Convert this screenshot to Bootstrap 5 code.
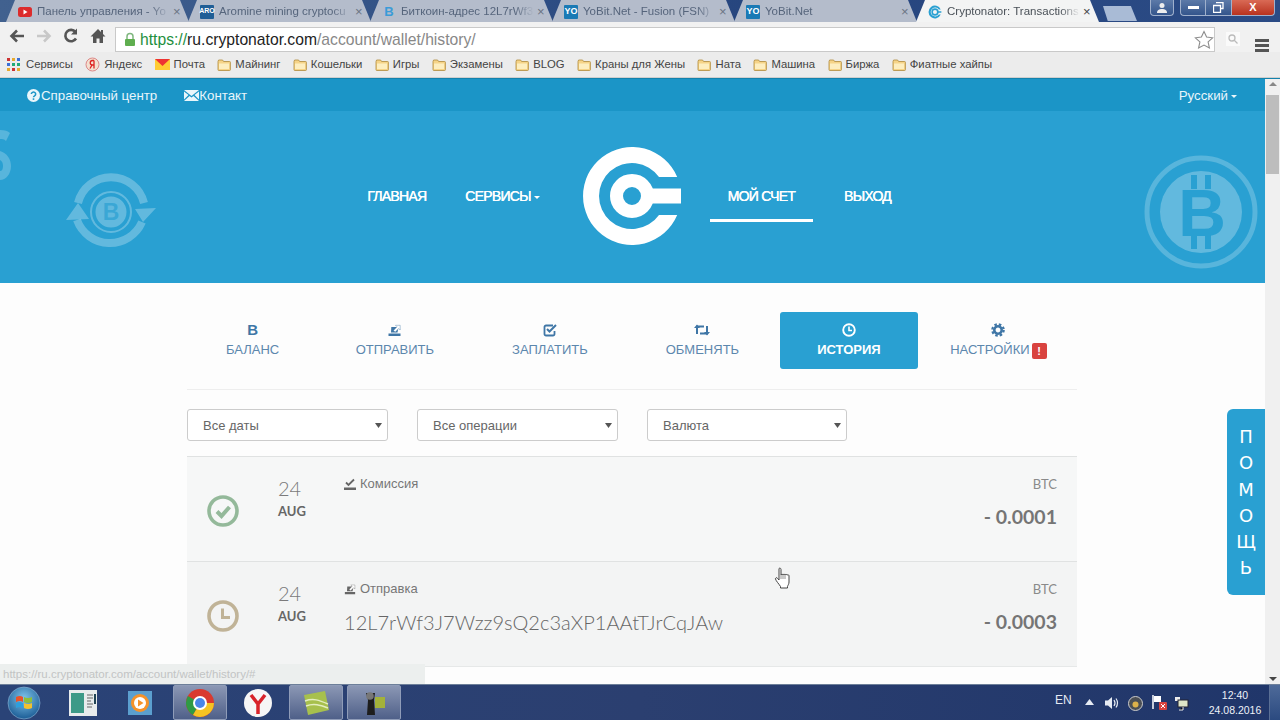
<!DOCTYPE html>
<html lang="ru">
<head>
<meta charset="utf-8">
<title>Cryptonator: Transactions</title>
<link href="https://cdn.jsdelivr.net/npm/bootstrap@5.3.0/dist/css/bootstrap.min.css" rel="stylesheet">
<style>
html,body{height:720px;overflow:hidden}
body{width:1280px;background:#fdfdfd;font-family:"Liberation Sans",Arial,sans-serif;color:#666}
a{text-decoration:none}
.tabstrip{height:22px;background:linear-gradient(90deg,#41618f,#26457e 60%,#2b4b85);padding-left:6px}
.btab{width:183px;margin-right:-1px;height:22px;flex:none;background:#b4bccb;clip-path:polygon(0 100%,9px 0,calc(100% - 9px) 0,100% 100%);padding:1px 0 0 12px;color:#56657c;font-size:11.5px;position:relative}
.btab.on{background:#f3f4f4;color:#4a5158}
.tfav{width:14px;height:14px;flex:none;margin-right:5px;display:flex;align-items:center;justify-content:center;font-size:7px;font-weight:700;color:#fff;border-radius:1px}
.ttl{width:133px;flex:none;overflow:hidden;white-space:nowrap;-webkit-mask-image:linear-gradient(90deg,#000 85%,transparent);mask-image:linear-gradient(90deg,#000 85%,transparent)}
.tx{margin-left:3px;font-size:13px;line-height:14px;color:#6b7483}
.newtab{width:34px;height:15px;background:#a9bbd6;margin:6px 0 0 5px;flex:none;clip-path:polygon(0 0,82% 0,100% 100%,14% 100%)}
.winbtns{margin-left:auto;padding-right:5px;gap:6px;align-items:flex-start}
.wbt{height:16px;border:1px solid #9fb0cc;border-top:0;border-radius:0 0 4px 4px;background:linear-gradient(#5c7aa8,#34558c);display:flex;align-items:center;justify-content:center}
.toolbar{height:30px;background:#f1f1f1;padding:5px 0 0 8px}
.tool{width:18px;height:18px;margin-right:9px;flex:none}
.omni{width:1100px;height:25px;background:#fff;border:1px solid #c9c9c9;font-size:15.7px;line-height:23px;padding-left:8px;color:#888;margin-left:-1px;flex:none}
.omni b{font-weight:400;color:#1e8f3e}.omni i{font-style:normal;color:#222}
.bmarks{height:26px;background:#ececec;padding-left:7px;font-size:11.3px;color:#444;gap:12.4px;border-bottom:1px solid #cfcfcf}
.bm{gap:4px;white-space:nowrap}
.viewport{height:606px;position:relative;overflow:hidden;border-top:1px solid #1482ac}
.pagearea{width:1265px;flex:none;position:relative;overflow:hidden}
.sbar{width:15px;background:#f0f0f0;position:relative}
.sthumb{height:79px;background:#bdbdbd;margin:16px 1px 0}
.sarrow{height:0;width:0;border:4px solid transparent;position:absolute;left:4px}
.topstrip{height:32px;background:#1b95c7;color:#e9f6fb;font-size:13.3px;padding:1px 28px 0 27px}
.topstrip a{color:#e9f6fb}
.hero{height:172px;background:#29a0d2;position:relative;padding:0 7px 2px 0}
.hitem{padding:16px 18px 13px;line-height:20px;border-bottom:3px solid transparent;color:#fff;font-size:14px;font-weight:400;text-shadow:.4px 0 0 #fff;white-space:nowrap;letter-spacing:-.75px}
.hitem.cur{border-bottom-color:#fff}
.caret-d{display:inline-block;border:3.5px solid transparent;border-top-color:currentColor;border-bottom:0;vertical-align:middle;margin-left:3px}
.deco{position:absolute}
.wrapc{width:890px;margin-left:187px}
.acct{margin-top:29px;padding-bottom:20px;border-bottom:1px solid #eee;gap:3px}
.acct a{height:57px;padding:11px 37.5px 0;text-align:center;border-radius:3px;color:#5c87ad;font-size:13px;line-height:18px;white-space:nowrap;display:block}
.acct a:first-child{padding-left:39px;padding-right:36px}
.acct a svg,.tglyph{display:block;margin:0 auto 4px}
.tglyph{height:14px;line-height:14px;font-size:15px;font-weight:700;color:#3f76a6}
.acct a.act{background:#29a0d2;color:#fff;font-weight:700}
.acct a.set{padding-left:29px;padding-right:0}
.warn{display:inline-block;background:#d9433f;color:#fff;font-weight:700;width:15px;height:16px;line-height:16px;border-radius:2px;font-size:11px;vertical-align:-1px;margin-left:2px;text-align:center}
.filters{gap:29px;margin:19px 0 15px}
.filters select{width:201px;height:32px;flex:none;font-size:13px;color:#666;padding:1px 20px 0 15px;border:1px solid #ccc;border-radius:3px;background-size:7px 5px;background-position:right 5px center;background-image:url("data:image/svg+xml,%3Csvg xmlns='http://www.w3.org/2000/svg' viewBox='0 0 7 5'%3E%3Cpath d='M0 0h7L3.5 5z' fill='%23555'/%3E%3C/svg%3E");box-shadow:none}
.filters select.w3{width:200px}
.txrow{height:105px;background:#f6f7f7;border-top:1px solid #e0e2e2;padding:18px 20px 0 20px}
.txrow.alt{background:#f3f4f4}
.txend{border-top:1px solid #e6e8e8;height:40px}
.stico{width:32px;height:32px;margin-top:20px;flex:none}
.dt{width:34px;margin-left:39px;margin-right:32px;margin-top:1px;flex:none;font-family:Lato,"Liberation Sans",sans-serif;text-align:left}
.dt .dd{font-size:20px;font-weight:300;line-height:24px;color:#7a7a7a}
.dt .mm{font-size:13px;font-weight:700;line-height:18px;margin-top:2px;color:#666}
.lbl{font-size:13px;line-height:18px;color:#777;display:flex;align-items:center;gap:4px}
.addr{font-family:Lato,"Liberation Sans",sans-serif;font-weight:300;font-size:20px;line-height:24px;margin-top:12px;color:#666;letter-spacing:.05px}
.amt{text-align:right;font-family:Lato,"Liberation Sans",sans-serif;margin-left:auto}
.amt .cur-n{font-size:13px;line-height:18px;color:#8a8a8a}
.amt .val{font-size:19.5px;line-height:24px;margin-top:12px;font-weight:700;color:#757575}
.helpme{position:absolute;right:0;top:330px;width:38px;height:186px;background:#29a0d2;border-radius:6px 0 0 6px;color:#fff;font-size:18px;line-height:26.3px;text-align:center;padding-top:15px;font-family:"DejaVu Sans","Liberation Sans",sans-serif}
.statusb{position:absolute;left:0;bottom:0;width:425px;height:20px;background:#ecefee;color:#c2c4c4;font-size:11.5px;line-height:20px;padding-left:3px}
.pointer{position:absolute;left:774px;top:488px}
.taskbar{height:36px;background:linear-gradient(90deg,#2a4377,#2b3f70 50%,#20366a);border-top:1px solid #6d7f99;position:relative}
.tbi{width:54px;height:35px;flex:none;margin-right:4px;display:flex;align-items:center;justify-content:center}
.tbi.hi{background:linear-gradient(#8b97b4,#4f6089);border:1px solid #8f9cb8;border-radius:2px}
.orb{width:69px;flex:none;padding-left:6px}
.tray{margin-left:auto;color:#e6ebf3;font-size:12px;gap:0}
.clock{text-align:center;line-height:15px;font-size:10.5px;width:68px;color:#eef2f8}
.showd{width:11px;height:35px;background:linear-gradient(#4e6a99,#2b4a80);border-left:1px solid #5a6f95}
</style>
</head>
<body class="d-flex flex-column">
<svg width="0" height="0" class="position-absolute">
<symbol id="fold" viewBox="0 0 14 12"><path d="M1 2.5 1.6 1h4l1 1.500h6a.8.8 0 0 1 .8.8v7.400a.8.8 0 0 1-.8.800H1.800a.8.8 0 0 1-.8-.8z" fill="#f6d488" stroke="#b08a3c" stroke-width=".8"/><path d="M2 4.500h10v5.500H2z" fill="#fdeec0"/></symbol>
<symbol id="send" viewBox="0 0 14 14"><path d="M1 10.500h12V13H1zM3.500 9.500l.3-5.500h7.200l-1 5.500z" fill="currentColor"/><path d="M6 7.500 9.500 3.800 8 2.300h4.700V7L11.200 5.500 7.700 9z" fill="#fff" stroke="currentColor" stroke-width=".4"/></symbol>
</svg>

<div class="tabstrip d-flex">
  <div class="btab d-flex align-items-center"><span class="tfav"><svg width="14" height="10" viewBox="0 0 14 10"><rect width="14" height="10" rx="2.500" fill="#dc2c2c"/><path d="M5.500 2.500 9.500 5l-4 2.500z" fill="#fff"/></svg></span><span class="ttl">Панель управления - Yo</span><span class="tx">×</span></div>
  <div class="btab d-flex align-items-center"><span class="tfav" style="background:#1f5e96">ARO</span><span class="ttl">Aromine mining cryptocu</span><span class="tx">×</span></div>
  <div class="btab d-flex align-items-center"><span class="tfav" style="color:#3a9bd8;font-size:13px">B</span><span class="ttl">Биткоин-адрес 12L7rWf3</span><span class="tx">×</span></div>
  <div class="btab d-flex align-items-center"><span class="tfav" style="background:#1a7ab5;font-size:9px">YO</span><span class="ttl">YoBit.Net - Fusion (FSN)</span><span class="tx">×</span></div>
  <div class="btab d-flex align-items-center"><span class="tfav" style="background:#1a7ab5;font-size:9px">YO</span><span class="ttl">YoBit.Net</span><span class="tx">×</span></div>
  <div class="btab on d-flex align-items-center"><span class="tfav"><svg width="14" height="14" viewBox="-11 -11 22 22"><path d="M9 -4A10 10 0 1 0 9 4L6 4A7 7 0 1 1 6 -4z" fill="#29a0d2"/><circle r="4.500" fill="none" stroke="#29a0d2" stroke-width="2.500"/><path d="M3-1.200h7v2.400H3z" fill="#29a0d2"/></svg></span><span class="ttl">Cryptonator: Transactions</span><span class="tx" style="color:#444">×</span></div>
  <div class="newtab"></div>
  <div class="winbtns d-flex">
    <div class="wbt" style="width:24px"><svg width="12" height="12" viewBox="0 0 12 12"><circle cx="6" cy="3.500" r="2.500" fill="#eee"/><path d="M1 11c0-3 2-4 5-4s5 1 5 4z" fill="#eee"/></svg></div>
    <div class="d-flex">
      <div class="wbt" style="width:25px;border-radius:0 0 0 4px;border-right:0"><span class="d-block bg-white" style="width:11px;height:3px"></span></div>
      <div class="wbt" style="width:26px;border-radius:0;border-right:0"><svg width="11" height="11" viewBox="0 0 11 11"><path d="M3 .500h7v6H8M.500 3.500h7v7h-7z" fill="none" stroke="#fff" stroke-width="1.300"/></svg></div>
      <div class="wbt text-white fw-bold" style="width:44px;border-radius:0 0 4px 0;background:linear-gradient(#d96a55,#b8321f);font-size:11px">X</div>
    </div>
  </div>
</div>

<div class="toolbar d-flex align-items-start">
  <svg class="tool" viewBox="0 0 18 18"><path d="M16 9H4M9 3.500 3.500 9 9 14.500" fill="none" stroke="#555" stroke-width="2.600"/></svg>
  <svg class="tool" viewBox="0 0 18 18"><path d="M2 9h12M9 3.500 14.500 9 9 14.500" fill="none" stroke="#c8c8c8" stroke-width="2.600"/></svg>
  <svg class="tool" viewBox="0 0 18 18"><path d="M14 11.500A5.700 5.700 0 1 1 13.500 5" fill="none" stroke="#555" stroke-width="2.600"/><path d="M15 1.500v6h-6z" fill="#555"/></svg>
  <svg class="tool" viewBox="0 0 18 18"><path d="M9 2 1.500 9.500H4V16h3.500v-4.500h3V16H14V9.500h2.500L14 7V3h-2v2z" fill="#555"/></svg>
  <div class="omni d-flex align-items-center">
    <svg width="12" height="15" viewBox="0 0 12 15" class="me-1 flex-none"><path d="M3 7V4.500a3 3 0 0 1 6 0V7" fill="none" stroke="#7fb77f" stroke-width="1.500"/><rect x="1" y="7" width="10" height="7" rx="1" fill="#5fae4f"/></svg>
    <span class="flex-grow-1"><b>https://</b><i>ru.cryptonator.com</i>/account/wallet/history/</span>
    <svg width="20" height="20" viewBox="0 0 20 20" style="flex:none"><path d="m10 1.500 2.600 5.600 6 .7-4.500 4.100 1.300 6L10 15l-5.400 2.900 1.300-6L1.400 7.800l6-.7z" fill="#fff" stroke="#8c8c8c" stroke-width="1.100"/></svg>
  </div>
  <div class="d-flex justify-content-center" style="width:36px;padding-top:5px"><svg width="14" height="14" viewBox="0 0 14 14"><rect width="14" height="14" fill="#fafafa"/><circle cx="6" cy="6" r="3" fill="none" stroke="#bbb" stroke-width="1.300"/><path d="m8 8 3.500 3.500" stroke="#bbb" stroke-width="1.300"/></svg></div>
  <div style="padding:6px 0 0 3px"><svg width="16" height="13" viewBox="0 0 16 13"><path d="M1 0h14v3H1zM1 5h14v3H1zM1 10h14v3H1z" fill="#555"/></svg></div>
</div>

<div class="bmarks d-flex align-items-center">
  <div class="bm d-flex align-items-center" style="gap:6px"><svg width="13" height="13" viewBox="0 0 13 13"><g fill="#c33"><rect width="3" height="3"/><rect x="10" y="5" width="3" height="3" fill="#2a7"/></g><rect x="5" width="3" height="3" fill="#e8a92c"/><rect x="10" width="3" height="3" fill="#3a6fd8"/><rect y="5" width="3" height="3" fill="#3a6fd8"/><rect x="5" y="5" width="3" height="3" fill="#2a7"/><rect y="10" width="3" height="3" fill="#e8a92c"/><rect x="5" y="10" width="3" height="3" fill="#c33"/><rect x="10" y="10" width="3" height="3" fill="#e8a92c"/></svg>Сервисы</div>
  <div class="bm d-flex align-items-center"><svg width="15" height="15" viewBox="0 0 15 15"><circle cx="7.500" cy="7.500" r="6.500" fill="#f3e0d0" stroke="#d88" /><path d="M9 3.500v8M9 3.500H7.500a2 2 0 0 0 0 4.500H9M7 8l-2 3.500" fill="none" stroke="#d22" stroke-width="1.300"/></svg>Яндекс</div>
  <div class="bm d-flex align-items-center"><svg width="15" height="11" viewBox="0 0 15 11"><rect width="15" height="11" fill="#fc3"/><path d="M0 0h15L7.500 7z" fill="#e33"/></svg>Почта</div>
  <div class="bm d-flex align-items-center"><svg width="14" height="12"><use href="#fold"/></svg>Майнинг</div>
  <div class="bm d-flex align-items-center"><svg width="14" height="12"><use href="#fold"/></svg>Кошельки</div>
  <div class="bm d-flex align-items-center"><svg width="14" height="12"><use href="#fold"/></svg>Игры</div>
  <div class="bm d-flex align-items-center"><svg width="14" height="12"><use href="#fold"/></svg>Экзамены</div>
  <div class="bm d-flex align-items-center"><svg width="14" height="12"><use href="#fold"/></svg>BLOG</div>
  <div class="bm d-flex align-items-center"><svg width="14" height="12"><use href="#fold"/></svg>Краны для Жены</div>
  <div class="bm d-flex align-items-center"><svg width="14" height="12"><use href="#fold"/></svg>Ната</div>
  <div class="bm d-flex align-items-center"><svg width="14" height="12"><use href="#fold"/></svg>Машина</div>
  <div class="bm d-flex align-items-center"><svg width="14" height="12"><use href="#fold"/></svg>Биржа</div>
  <div class="bm d-flex align-items-center"><svg width="14" height="12"><use href="#fold"/></svg>Фиатные хайпы</div>
</div>

<div class="viewport d-flex">
  <div class="pagearea">
    <div class="topstrip d-flex align-items-center">
      <a href="#" class="d-flex align-items-center"><svg width="13" height="13" viewBox="0 0 13 13" style="margin-right:1px"><circle cx="6.500" cy="6.500" r="6.500" fill="#e9f6fb"/><path d="M4.300 5a2.200 2 0 1 1 3.300 1.800c-.8.500-1.100.8-1.100 1.500" fill="none" stroke="#1b95c7" stroke-width="1.500"/><rect x="5.700" y="9.300" width="1.600" height="1.600" fill="#1b95c7"/></svg>Справочный центр</a>
      <a href="#" class="d-flex align-items-center" style="margin-left:27px"><svg width="15" height="11" viewBox="0 0 15 11"><path d="M0 0h15L7.500 6z" fill="#e9f6fb"/><path d="M0 1.500 4.500 5 0 9.500zM15 1.500 10.500 5 15 9.500zM5.500 6l2 1.600L9.500 6 15 11H0z" fill="#e9f6fb"/></svg>Контакт</a>
      <a href="#" class="ms-auto">Русский<span class="caret-d"></span></a>
    </div>
    <div class="hero d-flex justify-content-center align-items-center">
      <svg class="deco" style="left:0;top:16px" width="12" height="54" viewBox="0 0 12 54"><path d="M0 3C5 3 8 4 10 6L6 14C4 12 2 12 0 12zM0 24C7 26 11 32 11 39 11 47 6 53 0 53V44C2 44 3 42 3 39 3 36 2 34 0 33z" fill="#fff" opacity=".22"/></svg>
      <svg class="deco" style="left:61px;top:58px" width="100" height="86" viewBox="-50 -43 100 86"><g fill="none" stroke="#fff" stroke-opacity=".27" stroke-width="8"><path d="M-33 -9A34 34 0 0 1 33 -9"/><path d="M31 10A35 35 0 0 1 -34 8"/></g><g fill="#fff" fill-opacity=".27"><path d="M45 -4 32 10 24 -3zM-45 8 -33 -9 -22 7z"/><circle r="20" fill="none" stroke="#fff" stroke-opacity=".27" stroke-width="2"/><circle r="15.500"/></g><text y="8" text-anchor="middle" font-family="Liberation Sans" font-weight="700" font-size="23" fill="#29a0d2" fill-opacity=".7">B</text></svg>
      <svg class="deco" style="left:1144px;top:44px" width="114" height="114" viewBox="-57 -57 114 114"><circle r="54" fill="none" stroke="#fff" stroke-opacity=".22" stroke-width="5"/><circle r="41" fill="#fff" fill-opacity=".27"/><g fill="#29a0d2"><rect x="-10" y="-37" width="6" height="14"/><rect x="4" y="-37" width="6" height="14"/><rect x="-10" y="23" width="6" height="14"/><rect x="4" y="23" width="6" height="14"/><text x="1" y="24" text-anchor="middle" font-family="Liberation Sans" font-weight="700" font-size="66">B</text></g></svg>
      <a href="#" class="hitem">ГЛАВНАЯ</a>
      <a href="#" class="hitem" style="margin-left:3px">СЕРВИСЫ<span class="caret-d"></span></a>
      <svg style="flex:none;margin:0 29px 0 25px" width="98" height="98" viewBox="-49 -49 98 98"><path d="M45.200-19A49 49 0 1 0 45.200 19L27 19A33 33 0 1 1 27-19z" fill="#fff"/><circle r="15.500" fill="none" stroke="#fff" stroke-width="13"/><path d="M10-7.500h39v15H10z" fill="#fff"/></svg>
      <a href="#" class="hitem cur">МОЙ СЧЕТ</a>
      <a href="#" class="hitem" style="margin-left:13px">ВЫХОД</a>
    </div>
    <div class="wrapc">
      <div class="acct d-flex">
        <a href="#"><span class="tglyph">B</span>БАЛАНС</a>
        <a href="#"><svg width="15" height="14" style="color:#3f76a6"><use href="#send"/></svg>ОТПРАВИТЬ</a>
        <a href="#"><svg width="14" height="14" viewBox="0 0 14 14"><path d="M11.500 8v3a1.500 1.500 0 0 1-1.500 1.500H3A1.500 1.500 0 0 1 1.500 11V4A1.500 1.500 0 0 1 3 2.500h7" fill="none" stroke="#3f76a6" stroke-width="1.800"/><path d="M4 6l2.500 2.500L13 2" fill="none" stroke="#3f76a6" stroke-width="2"/></svg>ЗАПЛАТИТЬ</a>
        <a href="#"><svg width="16" height="14" viewBox="0 0 16 14"><path d="M3 11V3.500h7M13 3v7.500H6" fill="none" stroke="#3f76a6" stroke-width="2"/><path d="M0 5 3 1.500 6 5zM10 9l3 3.500L16 9z" fill="#3f76a6"/></svg>ОБМЕНЯТЬ</a>
        <a href="#" class="act"><svg width="14" height="14" viewBox="0 0 14 14"><circle cx="7" cy="7" r="5.800" fill="none" stroke="#fff" stroke-width="1.900"/><path d="M7 3.500V7.500h3" fill="none" stroke="#fff" stroke-width="1.600"/></svg>ИСТОРИЯ</a>
        <a href="#" class="set"><svg width="14" height="14" viewBox="-7 -7 14 14"><circle r="3.700" fill="none" stroke="#3f76a6" stroke-width="2.600"/><circle r="5.700" fill="none" stroke="#3f76a6" stroke-width="2.200" stroke-dasharray="2.500 2"/></svg><span>НАСТРОЙКИ</span><span class="warn">!</span></a>
      </div>
      <div class="filters d-flex">
        <select class="form-select" aria-label="Все даты"><option>Все даты</option></select>
        <select class="form-select" aria-label="Все операции"><option>Все операции</option></select>
        <select class="form-select w3" aria-label="Валюта"><option>Валюта</option></select>
      </div>
      <div class="txrow d-flex align-items-start">
        <svg class="stico" viewBox="0 0 32 32"><circle cx="16" cy="16" r="14" fill="none" stroke="#94b99a" stroke-width="3.600"/><path d="m10 16.500 4.500 4.500L22.500 12" fill="none" stroke="#94b99a" stroke-width="4"/></svg>
        <div class="dt"><div class="dd">24</div><div class="mm">AUG</div></div>
        <div><div class="lbl"><svg width="12" height="12" viewBox="0 0 12 12"><path d="M0 9.500h12V12H0z" fill="#666"/><path d="m2 4.500 2.500 2.500L10 1.500" fill="none" stroke="#666" stroke-width="1.800"/></svg>Комиссия</div></div>
        <div class="amt"><div class="cur-n">BTC</div><div class="val">- 0.0001</div></div>
      </div>
      <div class="txrow alt d-flex align-items-start">
        <svg class="stico" viewBox="0 0 32 32"><circle cx="16" cy="16" r="14" fill="none" stroke="#c0b397" stroke-width="3.600"/><path d="M15.500 8.500V17.500H23" fill="none" stroke="#c0b397" stroke-width="3"/></svg>
        <div class="dt"><div class="dd">24</div><div class="mm">AUG</div></div>
        <div><div class="lbl"><svg width="12" height="14" style="color:#666"><use href="#send"/></svg>Отправка</div><div class="addr">12L7rWf3J7Wzz9sQ2c3aXP1AAtTJrCqJAw</div></div>
        <div class="amt"><div class="cur-n">BTC</div><div class="val">- 0.0003</div></div>
      </div>
      <div class="txend"></div>
    </div>
    <div class="helpme">П<br>О<br>М<br>О<br>Щ<br>Ь</div>
    <div class="statusb">https://ru.cryptonator.com/account/wallet/history/#</div>
    <svg class="pointer" width="17" height="22" viewBox="0 0 17 22"><path d="M5 1.500c1-1 2 0 2 1V8c0-1 2-1 2 0 0-1 2-1 2 0 .2-1 2-.8 2 .2.300-.7 2-.5 2 .5V15c0 2-1 3-1.500 4.500v1.500H6.500v-1.500C5 17 2 14 1.500 12c-.3-1 1-2 2-.7L5 13z" fill="#fff" stroke="#444" stroke-width="1"/><path d="M7 8v4M9 8v4M11 8v4" stroke="#666" stroke-width=".7"/></svg>
  </div>
  <div class="sbar">
    <div class="sarrow" style="top:3px;border-top:0;border-bottom-color:#888"></div>
    <div class="sthumb"></div>
    <div class="sarrow" style="bottom:3px;border-bottom:0;border-top-color:#444"></div>
  </div>
</div>

<div class="taskbar d-flex align-items-center">
  <div class="orb"><svg width="36" height="36" viewBox="0 0 36 36"><defs><radialGradient id="og" cx=".5" cy=".35" r=".7"><stop offset="0" stop-color="#7ec3ea"/><stop offset="1" stop-color="#14558f"/></radialGradient></defs><circle cx="18" cy="18" r="16" fill="url(#og)" stroke="#8fb6d6" stroke-width=".6"/><path d="M10 12q4-2 7 0v5q-3-2-7 0z" fill="#e8532a"/><path d="M18 12q4 2 8 0v5q-4 2-8 0z" fill="#8fbf3a"/><path d="M10 18q4-2 7 0v5q-3-2-7 0z" fill="#2e9fdc"/><path d="M18 18q4 2 8 0v5q-4 2-8 0z" fill="#f2c12e"/></svg></div>
  <div class="d-flex" style="margin-right:31px"><svg width="28" height="26" viewBox="0 0 28 26"><rect width="28" height="26" fill="#e8eced"/><rect x="2" y="3" width="13" height="20" fill="#3d9a88"/><path d="M18 5h6M18 8h6M18 11h4M18 14h6M18 17h5" stroke="#666"/><rect x="25" y="4" width="2" height="10" fill="#245"/></svg></div>
  <div class="d-flex" style="margin-right:21px"><svg width="24" height="26" viewBox="0 0 24 26"><rect y="1" width="24" height="24" fill="#5b9fcf"/><circle cx="12" cy="13" r="9" fill="#f5922a"/><circle cx="12" cy="13" r="6" fill="#fff"/><path d="M10 9.500 15.500 13 10 16.500z" fill="#f5922a"/></svg></div>
  <div class="tbi hi"><svg width="28" height="28" viewBox="-14 -14 28 28"><circle r="14" fill="#d93a2f"/><path d="M0 0-12.100-7A14 14 0 0 0-7 12.100z" fill="#2f9a45"/><path d="M-7 12.100A14 14 0 0 0 14 0H0z" fill="#f5c423"/><circle r="7" fill="#fff"/><circle r="5" fill="#4a86e8"/></svg></div>
  <div class="tbi"><svg width="28" height="28" viewBox="-14 -14 28 28"><circle r="14" fill="#f6f6f6"/><path d="M-7-8 0 1 7-8M0 1v10" fill="none" stroke="#d8232a" stroke-width="3.500"/></svg></div>
  <div class="tbi hi"><svg width="28" height="26" viewBox="0 0 28 26"><path d="M2 5 23 1l4 19-21 5z" fill="#a7c04d"/><path d="M3 11c8-3 14-1 23 3M4 16c8-3 14-1 22 2" fill="none" stroke="#e4eec0" stroke-width="1.500"/></svg></div>
  <div class="tbi hi"><svg width="28" height="28" viewBox="0 0 28 28"><path d="M6 4h9l-1 7 1 15H7L8 11z" fill="#1d1d1d"/><circle cx="10" cy="7" r="3.800" fill="#777"/><rect x="15" y="8" width="10" height="11" fill="#a3b23a"/></svg></div>
  <div class="tray d-flex align-items-center">
    <span style="width:30px;margin-top:-5px">EN</span>
    <span style="width:20px;margin-top:-3px"><svg width="9" height="6" viewBox="0 0 9 6"><path d="M4.500 0 9 6H0z" fill="#e6ebf3"/></svg></span>
    <span style="width:23px"><svg width="15" height="14" viewBox="0 0 15 14"><path d="M0 4.500h3L7 1v12L3 9.500H0z" fill="#e6ebf3"/><path d="M9 4q2 3 0 6M11 2.500q3 4.500 0 9" fill="none" stroke="#e6ebf3" stroke-width="1.200"/></svg></span>
    <span style="width:24px"><svg width="15" height="15" viewBox="0 0 15 15"><circle cx="7.500" cy="7.500" r="7" fill="#4b4f55" stroke="#ccc"/><circle cx="7.500" cy="8.500" r="3" fill="#ddb24a"/></svg></span>
    <span style="width:22px"><svg width="15" height="16" viewBox="0 0 15 16"><path d="M1 0v14" stroke="#fff" stroke-width="1.500"/><path d="M2 1h7v6H2z" fill="#fff"/><rect x="7" y="7" width="8" height="8" rx="1" fill="#d9433f"/><path d="m9 9 4 4m0-4-4 4" stroke="#fff"/></svg></span>
    <span style="width:27px"><svg width="15" height="15" viewBox="0 0 15 15"><rect x="1" y="1" width="5" height="4" fill="#eee"/><rect x="4" y="4" width="10" height="7" fill="#dfe6c8" stroke="#223"/><path d="M9 11v3H5" stroke="#eee"/></svg></span>
    <div class="clock">12:40<br>24.08.2016</div>
    <div class="showd"></div>
  </div>
</div>
</body>
</html>
